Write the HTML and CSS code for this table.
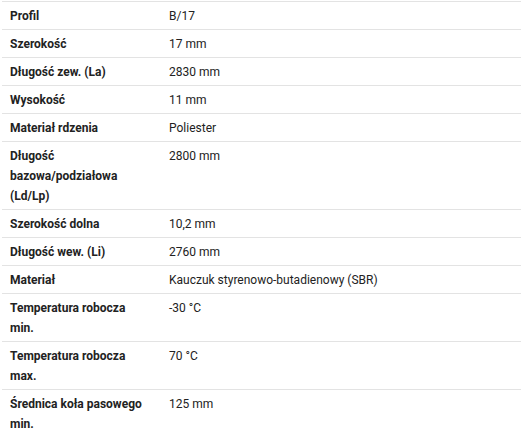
FILE: index.html
```html
<!DOCTYPE html>
<html lang="pl">
<head>
<meta charset="utf-8">
<link rel="stylesheet" href="styles.css">
</head>
<body>
<table class="specs">
  <tr><th>Profil</th><td>B/17</td></tr>
  <tr><th>Szerokość</th><td>17 mm</td></tr>
  <tr><th>Długość zew. (La)</th><td>2830 mm</td></tr>
  <tr><th>Wysokość</th><td>11 mm</td></tr>
  <tr><th>Materiał rdzenia</th><td>Poliester</td></tr>
  <tr><th>Długość bazowa/podziałowa (Ld/Lp)</th><td>2800 mm</td></tr>
  <tr><th>Szerokość dolna</th><td>10,2 mm</td></tr>
  <tr><th>Długość wew. (Li)</th><td>2760 mm</td></tr>
  <tr><th>Materiał</th><td>Kauczuk styrenowo-butadienowy (SBR)</td></tr>
  <tr><th>Temperatura robocza min.</th><td>-30 °C</td></tr>
  <tr><th>Temperatura robocza max.</th><td>70 °C</td></tr>
  <tr><th>Średnica koła pasowego min.</th><td>125 mm</td></tr>
</table>
</body>
</html>
```
FILE: styles.css
```css
html, body {
  margin: 0;
  padding: 0;
  background: #fff;
}
body {
  padding: 1px 0 0 2px;
  font-family: Roboto, "Liberation Sans", sans-serif;
  font-size: 12px;
  color: #222;
}
.specs {
  width: 519px;
  border-collapse: collapse;
  border-top: 1px solid #e3e3e3;
}
.specs tr {
  border-bottom: 1px solid #e3e3e3;
}
.specs th, .specs td {
  padding: 4px 8px 3px;
  line-height: 20px;
  text-align: left;
  vertical-align: top;
}
.specs th {
  width: 137px;
  padding-right: 14px;
  font-weight: 700;
}
.specs td {
  font-weight: 400;
}
```
